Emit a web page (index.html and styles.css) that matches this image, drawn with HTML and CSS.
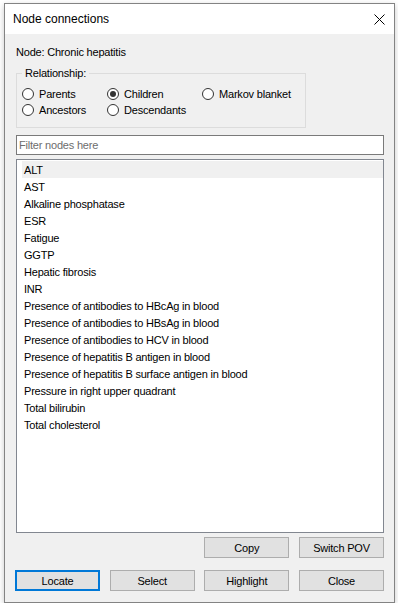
FILE: index.html
```html
<!DOCTYPE html>
<html lang="en">
<head>
    <meta charset="UTF-8">
    <meta name="viewport" content="width=device-width, initial-scale=1.0">
    <title>Node connections</title>
    <link rel="stylesheet" href="styles.css">
</head>
<body>
    <div class="dialog">
        <!-- title bar -->
        <div class="titlebar">
            <span class="title">Node connections</span>
            <svg class="close-icon" width="11" height="11" viewBox="0 0 11 11">
                <path d="M0.5 0.5 L10.5 10.5 M10.5 0.5 L0.5 10.5" stroke="#000" stroke-width="1" fill="none"/>
            </svg>
        </div>

        <div class="content">
            <div class="node-name">Node: Chronic hepatitis</div>

            <!-- relationship choice -->
            <fieldset class="relationship">
                <legend>Relationship:</legend>
                <div class="radio-grid">
                    <label class="radio"><span class="circle"></span>Parents</label>
                    <label class="radio checked"><span class="circle"></span>Children</label>
                    <label class="radio"><span class="circle"></span>Markov blanket</label>
                    <label class="radio"><span class="circle"></span>Ancestors</label>
                    <label class="radio"><span class="circle"></span>Descendants</label>
                </div>
            </fieldset>

            <input type="text" class="filter" placeholder="Filter nodes here">

            <ul class="node-list">
                <li class="selected">ALT</li>
                <li>AST</li>
                <li>Alkaline phosphatase</li>
                <li>ESR</li>
                <li>Fatigue</li>
                <li>GGTP</li>
                <li>Hepatic fibrosis</li>
                <li>INR</li>
                <li>Presence of antibodies to HBcAg in blood</li>
                <li>Presence of antibodies to HBsAg in blood</li>
                <li>Presence of antibodies to HCV in blood</li>
                <li>Presence of hepatitis B antigen in blood</li>
                <li>Presence of hepatitis B surface antigen in blood</li>
                <li>Pressure in right upper quadrant</li>
                <li>Total bilirubin</li>
                <li>Total cholesterol</li>
            </ul>

            <div class="button-grid">
                <button class="btn copy-btn">Copy</button>
                <button class="btn">Switch POV</button>
                <button class="btn default">Locate</button>
                <button class="btn">Select</button>
                <button class="btn">Highlight</button>
                <button class="btn">Close</button>
            </div>
        </div>
    </div>
</body>
</html>
```

FILE: styles.css
```css
body {
    margin: 0;
    background: #fff;
    font-family: "Liberation Sans", Arial, sans-serif;
    font-size: 11px;
    letter-spacing: -0.2px;
    color: #000;
}
.dialog {
    box-sizing: border-box;
    width: 391px;
    height: 600px;
    margin: 3px 0 0 4px;
    border: 1px solid #838383;
    background: #f0f0f0;
    box-shadow: 0 2px 6px rgba(0, 0, 0, 0.22);
    overflow: hidden;
}
.titlebar {
    height: 30px;
    display: flex;
    align-items: center;
    padding: 0 9px 0 8px;
    background: #fff;
}
.title {
    font-size: 12px;
    letter-spacing: 0;
}
.close-icon {
    margin-left: auto;
}
.content {
    padding: 0 10px;
}
.node-name {
    margin: 12px 0 7px 1px;
    line-height: 13px;
}
.relationship {
    box-sizing: border-box;
    width: 290px;
    margin: 0 0 0 1px;
    padding: 6px 0 9px 5px;
    border: 1px solid #dcdcdc;
}
.relationship legend {
    padding: 0 3px;
    line-height: 14px;
}
.radio-grid {
    display: grid;
    grid-template-columns: 85px 95px auto;
    grid-auto-rows: 16px;
}
.radio {
    display: flex;
    align-items: center;
    gap: 5px;
}
.circle {
    box-sizing: border-box;
    width: 12px;
    height: 12px;
    border: 1px solid #333;
    border-radius: 50%;
    background: #fff;
    display: flex;
    align-items: center;
    justify-content: center;
}
.checked .circle::after {
    content: "";
    width: 6px;
    height: 6px;
    border-radius: 50%;
    background: #333;
}
.filter {
    display: block;
    box-sizing: border-box;
    width: 368px;
    height: 20px;
    margin: 7px 0 0 1px;
    padding: 0 2px;
    border: 1px solid #7a7a7a;
    font-family: inherit;
    font-size: 11px;
    letter-spacing: -0.2px;
    outline: none;
}
.filter::placeholder {
    color: #6d6d6d;
}
.node-list {
    box-sizing: border-box;
    width: 368px;
    height: 374px;
    margin: 4px 0 0 1px;
    padding: 1px 0 0 5px;
    list-style: none;
    background: #fff;
    border: 1px solid #828790;
}
.node-list li {
    box-sizing: border-box;
    height: 17px;
    padding: 1px 0 0 2px;
    line-height: 16px;
}
.node-list li.selected {
    background: #f0f0f0;
}
.button-grid {
    display: grid;
    grid-template-columns: repeat(4, 85px);
    grid-auto-rows: 21px;
    justify-content: space-between;
    row-gap: 12px;
    margin-top: 4px;
}
.btn {
    box-sizing: border-box;
    padding: 0;
    background: #e1e1e1;
    border: 1px solid #adadad;
    font-family: inherit;
    font-size: 11px;
    letter-spacing: -0.2px;
    color: #000;
}
.copy-btn {
    grid-column: 3;
}
.btn.default {
    border: 2px solid #0078d7;
}
```
